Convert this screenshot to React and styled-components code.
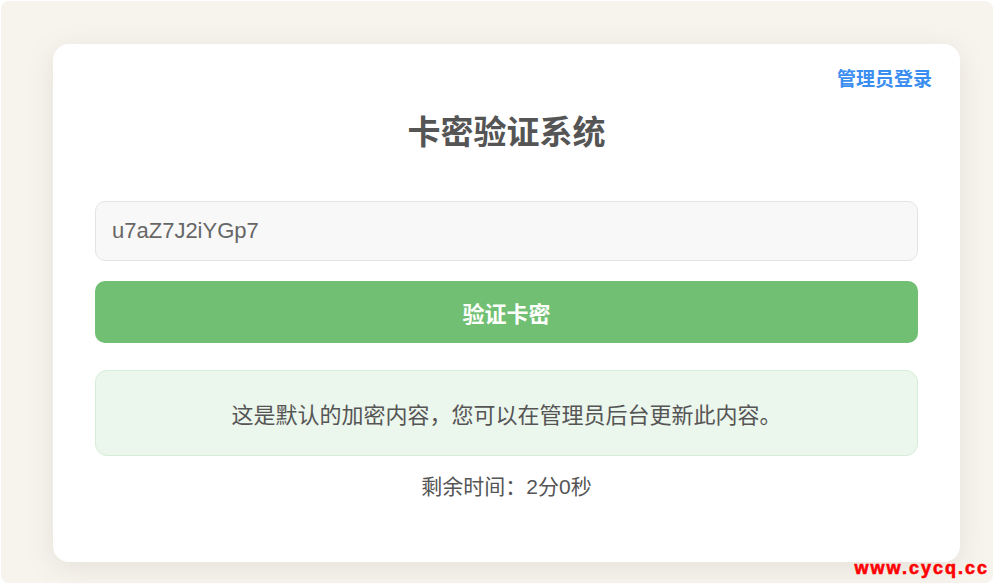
import React, { useState } from 'react';
import styled, { createGlobalStyle } from 'styled-components';

const GlobalStyle = createGlobalStyle`
  html, body {
    margin: 0;
    padding: 0;
    background: #ffffff;
  }
  body {
    font-family: "Liberation Sans", Arial, "Noto Sans CJK SC", sans-serif;
  }
`;

const Frame = styled.div`
  box-sizing: border-box;
  margin: 1px;
  height: 582px;
  border-radius: 8px;
  background: #f7f4ee;
  padding: 43px 33px 21px 52px;
  display: flex;
  position: relative;
`;

const Card = styled.div`
  position: relative;
  flex: 1;
  box-sizing: border-box;
  background: #ffffff;
  border-radius: 16px;
  box-shadow: 0 6px 28px rgba(120, 110, 90, 0.14);
  padding: 70px 42px 0;
  display: flex;
  flex-direction: column;
`;

const AdminLink = styled.a`
  position: absolute;
  top: 24px;
  right: 28px;
  font-size: 19px;
  line-height: 24px;
  font-weight: 700;
  color: #3b8ef0;
  text-decoration: none;
  cursor: pointer;
`;

const Title = styled.h1`
  margin: 0 0 49px;
  text-align: center;
  font-size: 33px;
  line-height: 38px;
  font-weight: 700;
  color: #555555;
`;

const KeyInput = styled.input`
  box-sizing: border-box;
  width: 100%;
  height: 60px;
  padding: 0 16px;
  border: 1px solid #e4e4e4;
  border-radius: 10px;
  background: #f8f8f8;
  font-family: "Liberation Sans", Arial, sans-serif;
  font-size: 22px;
  color: #666666;
  outline: none;
`;

const VerifyButton = styled.button`
  margin-top: 20px;
  height: 62px;
  border: none;
  border-radius: 10px;
  background: #70bf73;
  color: #ffffff;
  font-family: "Liberation Sans", Arial, "Noto Sans CJK SC", sans-serif;
  font-size: 22px;
  font-weight: 700;
  cursor: pointer;
`;

const ContentBox = styled.div`
  box-sizing: border-box;
  margin-top: 27px;
  height: 86px;
  display: flex;
  align-items: center;
  justify-content: center;
  background: #ebf6ec;
  border: 1px solid #d6eed9;
  border-radius: 12px;
  font-size: 22px;
  color: #555555;
`;

const Timer = styled.div`
  margin-top: 19px;
  text-align: center;
  font-size: 21px;
  line-height: 24px;
  color: #555555;
`;

const Watermark = styled.div`
  position: absolute;
  right: 4px;
  bottom: 4px;
  font-family: "Liberation Sans", Arial, sans-serif;
  font-size: 18px;
  font-weight: 900;
  letter-spacing: 2px;
  color: #ff0000;
  -webkit-text-stroke: 0.6px #ff0000;
`;

export default function App() {
  const [cardKey, setCardKey] = useState('u7aZ7J2iYGp7');

  return (
    <>
      <GlobalStyle />
      <Frame>
        <Card>
          <AdminLink>管理员登录</AdminLink>
          <Title>卡密验证系统</Title>
          <KeyInput value={cardKey} onChange={(e) => setCardKey(e.target.value)} />
          <VerifyButton>验证卡密</VerifyButton>
          <ContentBox>这是默认的加密内容，您可以在管理员后台更新此内容。</ContentBox>
          <Timer>剩余时间：2分0秒</Timer>
        </Card>
        <Watermark>www.cycq.cc</Watermark>
      </Frame>
    </>
  );
}
